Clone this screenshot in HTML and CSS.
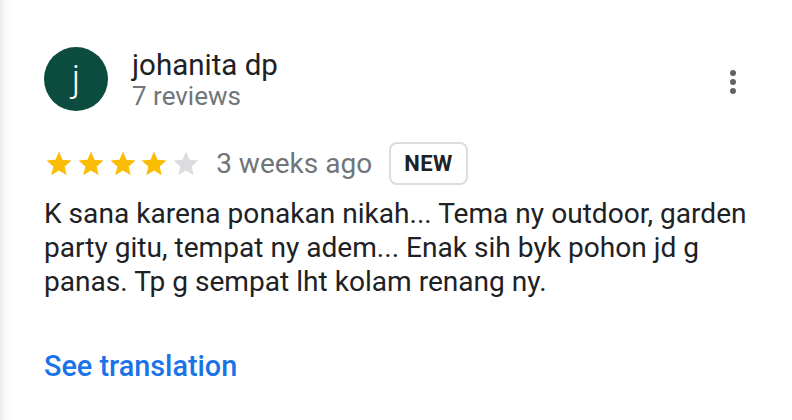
FILE: index.html
```html
<!DOCTYPE html>
<html lang="id">
<head>
<meta charset="utf-8">
<link rel="stylesheet" href="styles.css">
</head>
<body>
<div class="page">
  <div class="review">
    <div class="header">
      <div class="avatar">j</div>
      <div class="author">
        <div class="name">johanita dp</div>
        <div class="count">7 reviews</div>
      </div>
      <button class="more" aria-label="More">
        <span class="dot"></span><span class="dot"></span><span class="dot"></span>
      </button>
    </div>
    <div class="meta">
      <div class="stars">
        <svg class="star on" viewBox="0 0 24 24"><path d="M12 17.27L18.18 21l-1.64-7.03L22 9.24l-7.19-.61L12 2 9.19 8.63 2 9.24l5.46 4.73L5.82 21z"/></svg>
        <svg class="star on" viewBox="0 0 24 24"><path d="M12 17.27L18.18 21l-1.64-7.03L22 9.24l-7.19-.61L12 2 9.19 8.63 2 9.24l5.46 4.73L5.82 21z"/></svg>
        <svg class="star on" viewBox="0 0 24 24"><path d="M12 17.27L18.18 21l-1.64-7.03L22 9.24l-7.19-.61L12 2 9.19 8.63 2 9.24l5.46 4.73L5.82 21z"/></svg>
        <svg class="star on" viewBox="0 0 24 24"><path d="M12 17.27L18.18 21l-1.64-7.03L22 9.24l-7.19-.61L12 2 9.19 8.63 2 9.24l5.46 4.73L5.82 21z"/></svg>
        <svg class="star off" viewBox="0 0 24 24"><path d="M12 17.27L18.18 21l-1.64-7.03L22 9.24l-7.19-.61L12 2 9.19 8.63 2 9.24l5.46 4.73L5.82 21z"/></svg>
      </div>
      <span class="date">3 weeks ago</span>
      <span class="badge">NEW</span>
    </div>
    <p class="text">K sana karena ponakan nikah... Tema ny outdoor, garden party gitu, tempat ny adem... Enak sih byk pohon jd g panas. Tp g sempat lht kolam renang ny.</p>
    <a class="translate" href="#">See translation</a>
  </div>
</div>
</body>
</html>
```

FILE: styles.css
```css
* { box-sizing: border-box; }
html, body { margin: 0; padding: 0; }
body {
  font-family: Roboto, "Liberation Sans", Arial, sans-serif;
  color: #202124;
  background: #fff;
}
.page {
  width: 792px;
  height: 420px;
  overflow: hidden;
  background: linear-gradient(to right, #ececec 0, #f6f6f6 4px, #fcfcfc 8px, #fff 11px);
}
.review {
  padding: 46px 47px 0 44px;
}
.header {
  display: flex;
  align-items: flex-start;
}
.avatar {
  width: 64px;
  height: 64px;
  margin-top: 1px;
  border-radius: 50%;
  background: #0b4c3e;
  color: #fff;
  font-size: 37px;
  font-weight: 300;
  line-height: 64px;
  text-align: center;
  flex: none;
}
.author {
  margin-left: 24px;
  padding-top: 2px;
}
.name {
  font-size: 29.5px;
  line-height: 34px;
  color: #202124;
}
.count {
  font-size: 26px;
  line-height: 28px;
  color: #70757a;
}
.more {
  margin-left: auto;
  margin-top: 21px;
  width: 24px;
  height: 30px;
  border: 0;
  padding: 0;
  background: none;
  display: flex;
  flex-direction: column;
  align-items: center;
  justify-content: center;
  gap: 3px;
}
.dot {
  width: 6px;
  height: 6px;
  border-radius: 50%;
  background: #5f6368;
}
.meta {
  display: flex;
  align-items: center;
  margin-top: 31px;
  height: 43px;
}
.stars {
  display: flex;
  gap: 1.8px;
}
.star {
  width: 30px;
  height: 30px;
}
.star.on { fill: #fbbc04; }
.star.off { fill: #dadce0; }
.date {
  margin-left: 15px;
  font-size: 28px;
  color: #70757a;
}
.badge {
  margin-left: 17px;
  height: 43px;
  padding: 0 13px;
  border: 2px solid #dadce0;
  border-radius: 8px;
  font-size: 22px;
  font-weight: 700;
  letter-spacing: 0.5px;
  display: flex;
  align-items: center;
  color: #202124;
}
.text {
  margin: 12px -30px 0 0;
  font-size: 28.1px;
  line-height: 34px;
  color: #202124;
}
.translate {
  display: inline-block;
  margin-top: 50px;
  font-size: 28.8px;
  font-weight: 500;
  color: #1a73e8;
  text-decoration: none;
}
```
